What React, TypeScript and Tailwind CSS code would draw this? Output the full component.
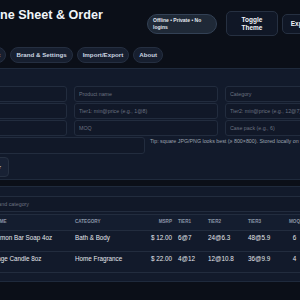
import React from "react";

const font = "font-['Liberation_Sans',Arial,sans-serif]";

const fields = [
  "SKU",
  "Product name",
  "Category",
  "MSRP",
  "Tier1: min@price (e.g., 1@8)",
  "Tier2: min@price (e.g., 12@7)",
  "Tier3",
  "MOQ",
  "Case pack (e.g., 6)",
];

const tabs = ["Products", "Line sheet", "Brand & Settings", "Import/Export", "About"];

const products = [
  { swatch: "bg-[#d9c27a]", sku: "LBS-4OZ", name: "Lemon Bar Soap 4oz", category: "Bath & Body", msrp: "$ 12.00", t1: "6@7", t2: "24@6.3", t3: "48@5.9", moq: "6", pack: "6" },
  { swatch: "bg-[#9fb08a]", sku: "SGC-8OZ", name: "Sage Candle 8oz", category: "Home Fragrance", msrp: "$ 22.00", t1: "4@12", t2: "12@10.8", t3: "36@9.9", moq: "4", pack: "4" },
];

export default function App() {
  return (
    <div className={`min-h-screen overflow-hidden bg-[#0b0f18] flex justify-center ${font}`}>
      <div className="w-[470px] shrink-0 pt-[8px]">
        {/* header */}
        <header className="flex items-start justify-between px-[8px]">
          <h1 className="text-[12.6px] leading-[15px] font-bold text-[#f1f5f9] whitespace-nowrap">
            Wholesale Line Sheet &amp; Order
          </h1>
          <div className="mt-[3px] flex items-center gap-[4px]">
            <span className="mr-[5px] flex h-[20px] w-[70px] items-center rounded-full border border-[#334155] bg-[#1f2937] px-[5px] text-[5px] leading-[7px] font-bold text-[#e2e8f0]">
              Offline • Private • No logins
            </span>
            <button className="h-[25px] w-[52px] rounded-[5px] border border-[#263041] bg-[#101726] px-[8px] text-[6.5px] leading-[8px] font-bold text-[#f1f5f9]">
              Toggle Theme
            </button>
            <button className="h-[20px] w-[38px] rounded-[5px] border border-[#263041] bg-[#101726] text-[6.5px] font-bold text-[#f1f5f9]">
              Export
            </button>
            <button className="h-[20px] w-[53px] rounded-[5px] border border-[#263041] bg-[#101726] text-[6.5px] font-bold text-[#f1f5f9]">
              Print
            </button>
          </div>
        </header>

        {/* tabs */}
        <nav className="mt-[11px] flex gap-[4px] px-[8px]">
          {tabs.map((t, i) => (
            <button
              key={t}
              className={`h-[16px] rounded-full border text-[6.2px] font-bold whitespace-nowrap ${
                i === 0
                  ? "border-[#3b4a8a] bg-[#28336b] px-[4px] text-white"
                  : "border-[#252f41] bg-[#171f2f] px-[5px] text-[#cbd5e1]"
              }`}
            >
              {t}
            </button>
          ))}
        </nav>

        {/* product form */}
        <section className="mt-[5px] rounded-[6px] border border-[#1f2a3c] bg-[#121a2b] px-[7px] pt-[17px] pb-[2px]">
          <div className="grid grid-cols-[repeat(3,144px)] gap-x-[7px] gap-y-[1px]">
            {fields.map((f) => (
              <input
                key={f}
                placeholder={f}
                className="h-[16px] rounded-[3px] border border-[#222c3e] bg-[#111828] px-[4px] text-[5.3px] text-[#e5e7eb] outline-none placeholder:text-[#6b7280]"
              />
            ))}
          </div>
          <div className="mt-[1px] flex items-start gap-[5px]">
            <div className="flex h-[17px] w-[222px] shrink-0 items-center rounded-[3px] border border-[#222c3e] bg-[#111828] px-[4px] text-[5.3px] text-[#6b7280]">
              Choose image
            </div>
            <p className="mt-[1px] whitespace-nowrap text-[5.3px] text-[#9ca3af]">
              Tip: square JPG/PNG looks best (≥ 800×800). Stored locally on your device.
            </p>
          </div>
          <div className="mt-[3px] flex gap-[4px]">
            <button className="h-[20px] w-[55.5px] rounded-[4px] border border-[#263041] bg-[#182134] text-[6.2px] font-bold text-[#e2e8f0]">
              Save Product
            </button>
            <button className="h-[20px] w-[26px] rounded-[4px] border border-[#263041] bg-[#182134] pl-[2px] text-left text-[6.2px] font-bold text-[#e2e8f0]">
              Clear
            </button>
          </div>
        </section>

        {/* product list */}
        <section className="mt-[6px] rounded-[6px] border border-[#1f2a3c] bg-[#121a2b] px-[7px] pt-[9px] pb-[8px]">
          <input
            placeholder="Search by name, SKU, brand and category"
            className="block h-[16px] w-full rounded-[3px] border border-[#222c3e] bg-[#111828] px-[4px] text-[5.3px] text-[#e5e7eb] outline-none placeholder:text-[#6b7280]"
          />
          <div className="mt-[2px] overflow-hidden rounded-[4px] border border-[#222c3e]">
            <table className="w-full table-fixed border-collapse">
              <colgroup>
                <col className="w-[24px]" />
                <col className="w-[42px]" />
                <col className="w-[82px]" />
                <col className="w-[75px]" />
                <col className="w-[28px]" />
                <col className="w-[30px]" />
                <col className="w-[40px]" />
                <col className="w-[40px]" />
                <col className="w-[19px]" />
                <col className="w-[30px]" />
                <col className="w-[42px]" />
              </colgroup>
              <thead>
                <tr className="h-[15px] border-b border-[#222c3e] bg-[#141d2f] text-[4.6px] font-bold uppercase text-[#8b95a7]">
                  <th className="px-[3px] text-left">Img</th>
                  <th className="px-[3px] text-left">SKU</th>
                  <th className="px-[3px] text-left">Name</th>
                  <th className="px-[3px] text-left">Category</th>
                  <th className="px-[3px] text-right">MSRP</th>
                  <th className="px-[3px] text-left">Tier1</th>
                  <th className="px-[3px] text-left">Tier2</th>
                  <th className="px-[3px] text-left">Tier3</th>
                  <th className="px-0 text-center">MOQ</th>
                  <th className="px-[3px] text-center">Case</th>
                  <th className="px-[3px] text-left"></th>
                </tr>
              </thead>
              <tbody className="text-[6.3px] leading-[8px] text-[#e5e7eb]">
                {products.map((p, i) => (
                  <tr key={p.sku} className={i < products.length - 1 ? "border-b border-[#222c3e]" : ""}>
                    <td className="px-[3px] py-[3px] align-top">
                      <div className={`h-[14px] w-[14px] rounded-[2px] ${p.swatch}`} />
                    </td>
                    <td className="px-[3px] pt-[3px] align-top whitespace-nowrap">{p.sku}</td>
                    <td className="px-[3px] pt-[3px] align-top whitespace-nowrap">{p.name}</td>
                    <td className="px-[3px] pt-[3px] align-top whitespace-nowrap">{p.category}</td>
                    <td className="px-[3px] pt-[3px] align-top text-right whitespace-nowrap">{p.msrp}</td>
                    <td className="px-[3px] pt-[3px] align-top">{p.t1}</td>
                    <td className="px-[3px] pt-[3px] align-top">{p.t2}</td>
                    <td className="px-[3px] pt-[3px] align-top">{p.t3}</td>
                    <td className="px-0 pt-[3px] align-top text-center">{p.moq}</td>
                    <td className="px-[3px] pt-[3px] align-top text-center">{p.pack}</td>
                    <td className="px-[3px] pt-[3px] align-top text-[#93a3c0]">Edit</td>
                  </tr>
                ))}
              </tbody>
            </table>
          </div>
        </section>
      </div>
    </div>
  );
}
